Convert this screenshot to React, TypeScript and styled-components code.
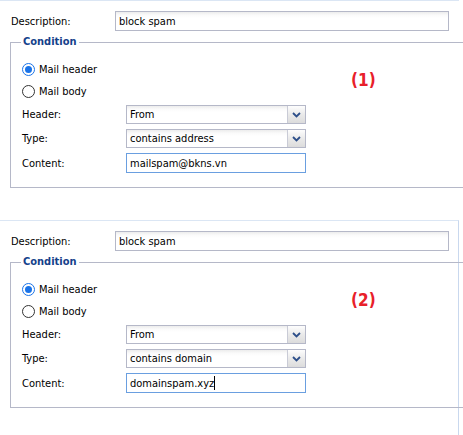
import React from 'react';
import styled, { createGlobalStyle } from 'styled-components';

const GlobalStyle = createGlobalStyle`
  html, body {
    margin: 0;
    padding: 0;
    background: #fff;
  }
  body {
    font-family: "DejaVu Sans Condensed", "Liberation Sans", sans-serif;
    font-size: 11px;
    color: #000;
  }
`;

const Panel = styled.div<{ $rightBorder?: boolean }>`
  box-sizing: border-box;
  width: 459px;
  height: 220px;
  border-top: 1px solid #dbe6f4;
  border-right: ${(p) => (p.$rightBorder ? '1px solid #c9d8ee' : 'none')};
  padding: 10px 0 0 10px;
`;

const Row = styled.div`
  display: flex;
  align-items: center;
  width: 439px;
`;

const Label = styled.div<{ $width?: number }>`
  width: ${(p) => p.$width ?? 105}px;
  padding-left: 1px;
  box-sizing: border-box;
  flex-shrink: 0;
`;

const TextBox = styled.div<{ $focused?: boolean; $width?: number }>`
  box-sizing: border-box;
  height: 20px;
  ${(p) => (p.$width ? `width: ${p.$width}px;` : 'flex: 1;')}
  border: 1px solid ${(p) => (p.$focused ? '#6a9fe0' : '#b5b8c8')};
  background: ${(p) =>
    p.$focused ? '#fff' : 'linear-gradient(to bottom, #ececec 0, #fafafa 3px, #fff 6px)'};
  padding: 0 3px;
  display: flex;
  align-items: center;
  white-space: nowrap;
`;

const Caret = styled.span`
  display: inline-block;
  width: 1px;
  height: 14px;
  background: #000;
`;

const Fieldset = styled.fieldset`
  position: relative;
  box-sizing: border-box;
  width: 439px;
  margin: 4px 0 0;
  padding: 0 10px 14px;
  border: 1px solid #b5b8c8;
`;

const Legend = styled.legend`
  padding: 0 2px;
  line-height: 14px;
  font-weight: bold;
  color: #15428b;
`;

const RadioGroup = styled.div`
  padding-top: 9px;
`;

const RadioRow = styled.div`
  display: flex;
  align-items: center;
  height: 22px;
  padding-left: 1px;
`;

const RadioCircle = styled.span<{ $checked?: boolean }>`
  box-sizing: border-box;
  width: 13px;
  height: 13px;
  border-radius: 50%;
  border: 1px solid ${(p) => (p.$checked ? '#1a73e8' : '#333')};
  background: #fff;
  margin-right: 4px;
  display: flex;
  align-items: center;
  justify-content: center;
  &::after {
    content: '';
    display: ${(p) => (p.$checked ? 'block' : 'none')};
    width: 7px;
    height: 7px;
    border-radius: 50%;
    background: #1a73e8;
  }
`;

const Fields = styled.div`
  display: flex;
  flex-direction: column;
  gap: 5px;
  margin-top: 3px;
`;

const Select = styled.div`
  box-sizing: border-box;
  width: 180px;
  height: 19px;
  border: 1px solid #b5b8c8;
  background: linear-gradient(to bottom, #ececec 0, #fafafa 3px, #fff 6px);
  display: flex;
  align-items: stretch;
`;

const SelectText = styled.div`
  flex: 1;
  padding: 0 3px;
  display: flex;
  align-items: center;
  white-space: nowrap;
`;

const Trigger = styled.div`
  width: 17px;
  border-left: 1px solid #c9cbd6;
  background: linear-gradient(to bottom, #fdfdfd 0, #eaeaea 50%, #dcdcdc 100%);
  display: flex;
  align-items: center;
  justify-content: center;
`;

const Annotation = styled.div`
  position: absolute;
  left: 340px;
  top: 21px;
  font-size: 17px;
  font-weight: bold;
  color: #e8202a;
`;

function Chevron() {
  return (
    <svg width="9" height="6" viewBox="0 0 9 6">
      <path d="M1 1 L4.5 4.5 L8 1" fill="none" stroke="#2d4f8a" strokeWidth="1.8" />
    </svg>
  );
}

function Combo({ value }: { value: string }) {
  return (
    <Select>
      <SelectText>{value}</SelectText>
      <Trigger>
        <Chevron />
      </Trigger>
    </Select>
  );
}

type RuleProps = {
  type: string;
  content: string;
  tag: string;
  caret?: boolean;
  rightBorder?: boolean;
};

function RulePanel({ type, content, tag, caret, rightBorder }: RuleProps) {
  return (
    <Panel $rightBorder={rightBorder}>
      <Row>
        <Label>Description:</Label>
        <TextBox>block spam</TextBox>
      </Row>
      <Fieldset>
        <Legend>Condition</Legend>
        <Annotation>{tag}</Annotation>
        <RadioGroup>
          <RadioRow>
            <RadioCircle $checked />
            Mail header
          </RadioRow>
          <RadioRow>
            <RadioCircle />
            Mail body
          </RadioRow>
        </RadioGroup>
        <Fields>
          <Row>
            <Label>Header:</Label>
            <Combo value="From" />
          </Row>
          <Row>
            <Label>Type:</Label>
            <Combo value={type} />
          </Row>
          <Row>
            <Label>Content:</Label>
            <TextBox $focused $width={180}>
              {content}
              {caret && <Caret />}
            </TextBox>
          </Row>
        </Fields>
      </Fieldset>
    </Panel>
  );
}

export default function App() {
  return (
    <>
      <GlobalStyle />
      <RulePanel type="contains address" content="mailspam@bkns.vn" tag="(1)" />
      <RulePanel type="contains domain" content="domainspam.xyz" tag="(2)" caret rightBorder />
    </>
  );
}
